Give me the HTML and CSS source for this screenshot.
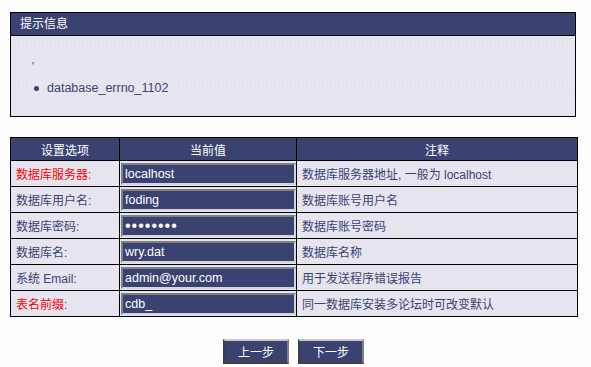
FILE: index.html
```html
<!DOCTYPE html>
<html lang="zh-CN">
<head>
<meta charset="utf-8">
<title>安装</title>
<link rel="stylesheet" href="styles.css">
</head>
<body>
<div class="page">
  <div class="msgbox">
    <div class="msgbox-head">提示信息</div>
    <div class="msgbox-body">
      <div class="quote">'</div>
      <ul class="msglist">
        <li>database_errno_1102</li>
      </ul>
    </div>
  </div>

  <table class="settings">
    <colgroup>
      <col class="c1"><col class="c2"><col class="c3">
    </colgroup>
    <thead>
      <tr class="head-row"><th>设置选项</th><th>当前值</th><th>注释</th></tr>
    </thead>
    <tbody>
      <tr>
        <td class="label warn">数据库服务器:</td>
        <td class="val"><input class="field" type="text" value="localhost"></td>
        <td class="note">数据库服务器地址, 一般为 localhost</td>
      </tr>
      <tr>
        <td class="label">数据库用户名:</td>
        <td class="val"><input class="field" type="text" value="foding"></td>
        <td class="note">数据库账号用户名</td>
      </tr>
      <tr>
        <td class="label">数据库密码:</td>
        <td class="val"><input class="field pw" type="password" value="12345678"></td>
        <td class="note">数据库账号密码</td>
      </tr>
      <tr>
        <td class="label">数据库名:</td>
        <td class="val"><input class="field" type="text" value="wry.dat"></td>
        <td class="note">数据库名称</td>
      </tr>
      <tr>
        <td class="label">系统 Email:</td>
        <td class="val"><input class="field" type="text" value="admin@your.com"></td>
        <td class="note">用于发送程序错误报告</td>
      </tr>
      <tr>
        <td class="label warn">表名前缀:</td>
        <td class="val"><input class="field" type="text" value="cdb_"></td>
        <td class="note">同一数据库安装多论坛时可改变默认</td>
      </tr>
    </tbody>
  </table>

  <div class="actions">
    <button class="btn" type="button">上一步</button>
    <button class="btn" type="button">下一步</button>
  </div>
</div>
</body>
</html>
```

FILE: styles.css
```css
html, body {
  margin: 0;
  padding: 0;
  background: #fcfdfc;
}
body {
  font-family: "Liberation Sans", "Noto Sans CJK SC", sans-serif;
  font-size: 12px;
  color: #3b4272;
}
.page {
  padding: 12px 15px 0 10px;
  width: 566px;
}
.msgbox {
  border: 1px solid #000;
  width: 564px;
}
.msgbox-head {
  background: #3b4272;
  color: #fff;
  height: 22px;
  line-height: 22px;
  padding-left: 9px;
  border-bottom: 1px solid #000;
  font-size: 12px;
}
.msgbox-body {
  background-color: #e4e3ee;
  background-image: radial-gradient(circle, #e9e9f1 0.7px, transparent 1px);
  background-size: 4px 3.3px;
  height: 80px;
  padding: 0 0 0 21px;
  box-sizing: border-box;
}
.quote {
  padding-top: 24px;
  height: 20px;
  line-height: 12px;
  font-size: 11px;
}
.msglist {
  margin: 0;
  padding: 0 0 0 15px;
  list-style: none;
  line-height: 16px;
}
.msglist li {
  font-size: 12.5px;
  position: relative;
}
.msglist li::before {
  content: "";
  position: absolute;
  left: -13px;
  top: 6px;
  width: 5px;
  height: 5px;
  border-radius: 50%;
  background: #3b4272;
}
.settings {
  margin-top: 20px;
  border-collapse: collapse;
  width: 567px;
  table-layout: fixed;
  border: 1px solid #000;
}
.c1 { width: 109px; }
.c2 { width: 177px; }
.c3 { width: 281px; }
.settings tr {
  height: 26px;
}
.settings tr.head-row {
  height: 23px;
}
.settings th {
  background: #3b4272;
  color: #fff;
  font-weight: normal;
  padding: 0;
  border: 1px solid #000;
  text-align: center;
  font-size: 12px;
}
.settings td {
  background-color: #e4e3ee;
  background-image: radial-gradient(circle, #e9e9f1 0.7px, transparent 1px);
  background-size: 4px 3.3px;
  border: 1px solid #000;
  padding: 0;
  font-size: 12px;
}
.settings td.label {
  padding-left: 5px;
}
.settings td.warn {
  color: #ff0000;
}
.settings td.note {
  padding-left: 5px;
}
.settings td.val {
  padding: 1px;
}
.field {
  display: block;
  width: 175px;
  height: 22px;
  box-sizing: border-box;
  margin: 0;
  padding: 0 0 0 2px;
  background: #3b4272;
  color: #fff;
  border: 2px solid;
  border-color: #808080 #d6d4dc #d6d4dc #808080;
  font-family: "Liberation Sans", "Noto Sans CJK SC", sans-serif;
  font-size: 12.5px;
  outline: none;
}
.field.pw {
  font-size: 16px;
  letter-spacing: 1px;
}
.actions {
  display: flex;
  justify-content: center;
  gap: 9px;
  margin-top: 22px;
  width: 567px;
}
.btn {
  width: 66px;
  height: 25px;
  margin: 0;
  padding: 0;
  background: #3b4272;
  color: #fff;
  font-family: "Noto Sans CJK SC", sans-serif;
  font-size: 12px;
  border: 2px solid;
  border-color: #c8c8c8 #808080 #404040 #404040;
}
```
